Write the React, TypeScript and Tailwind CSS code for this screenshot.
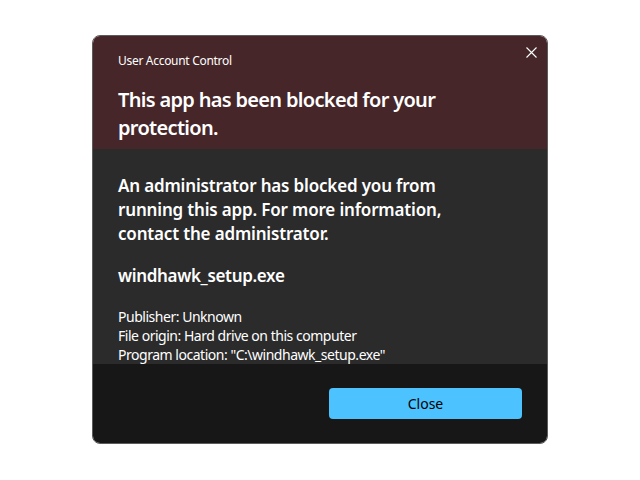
import React from "react";

export default function App() {
  return (
    <div className="w-[640px] h-[480px] bg-white relative" style={{ fontFamily: '"Noto Sans", "Open Sans", sans-serif' }}>
      <div className="absolute left-[92px] top-[35px] w-[456px] h-[409px] rounded-[8px] border border-[#5c5c5c] overflow-hidden flex flex-col">
        <div className="bg-[#462628] h-[113px] px-[25px] pt-[17px] relative">
          <div className="text-[12px] leading-[16px] text-white tracking-[-0.025em]">User Account Control</div>
          <button className="absolute right-[6px] top-[6px] w-[20px] h-[20px] flex items-center justify-center text-white">
            <svg width="11" height="11" viewBox="0 0 11 11" fill="none" stroke="white" strokeWidth="1.1">
              <path d="M0.5 0.5L10.5 10.5M10.5 0.5L0.5 10.5" />
            </svg>
          </button>
          <div className="mt-[17px] text-[20px] leading-[28px] font-semibold text-white tracking-[-0.034em] max-w-[330px]">
            This app has been blocked for your protection.
          </div>
        </div>
        <div className="bg-[#2b2b2b] px-[25px] pt-[25px] flex flex-col">
          <div className="text-[17px] leading-[24px] font-semibold text-white tracking-[-0.01em] max-w-[335px]">
            An administrator has blocked you from running this app. For more information, contact the administrator.
          </div>
          <div className="mt-[18px] text-[17px] leading-[24px] font-semibold text-white tracking-[-0.02em]">windhawk_setup.exe</div>
          <div className="mt-[19px] text-[14px] leading-[19px] text-white tracking-[-0.034em]">
            <div>Publisher: Unknown</div>
            <div>File origin: Hard drive on this computer</div>
            <div>Program location: "C:\windhawk_setup.exe"</div>
          </div>
        </div>
        <div className="bg-[#171717] flex-1 flex justify-end items-start pt-[24px] pr-[25px]">
          <button className="w-[193px] h-[31px] rounded-[4px] bg-[#4cc2ff] text-[14px] text-black">Close</button>
        </div>
      </div>
    </div>
  );
}
